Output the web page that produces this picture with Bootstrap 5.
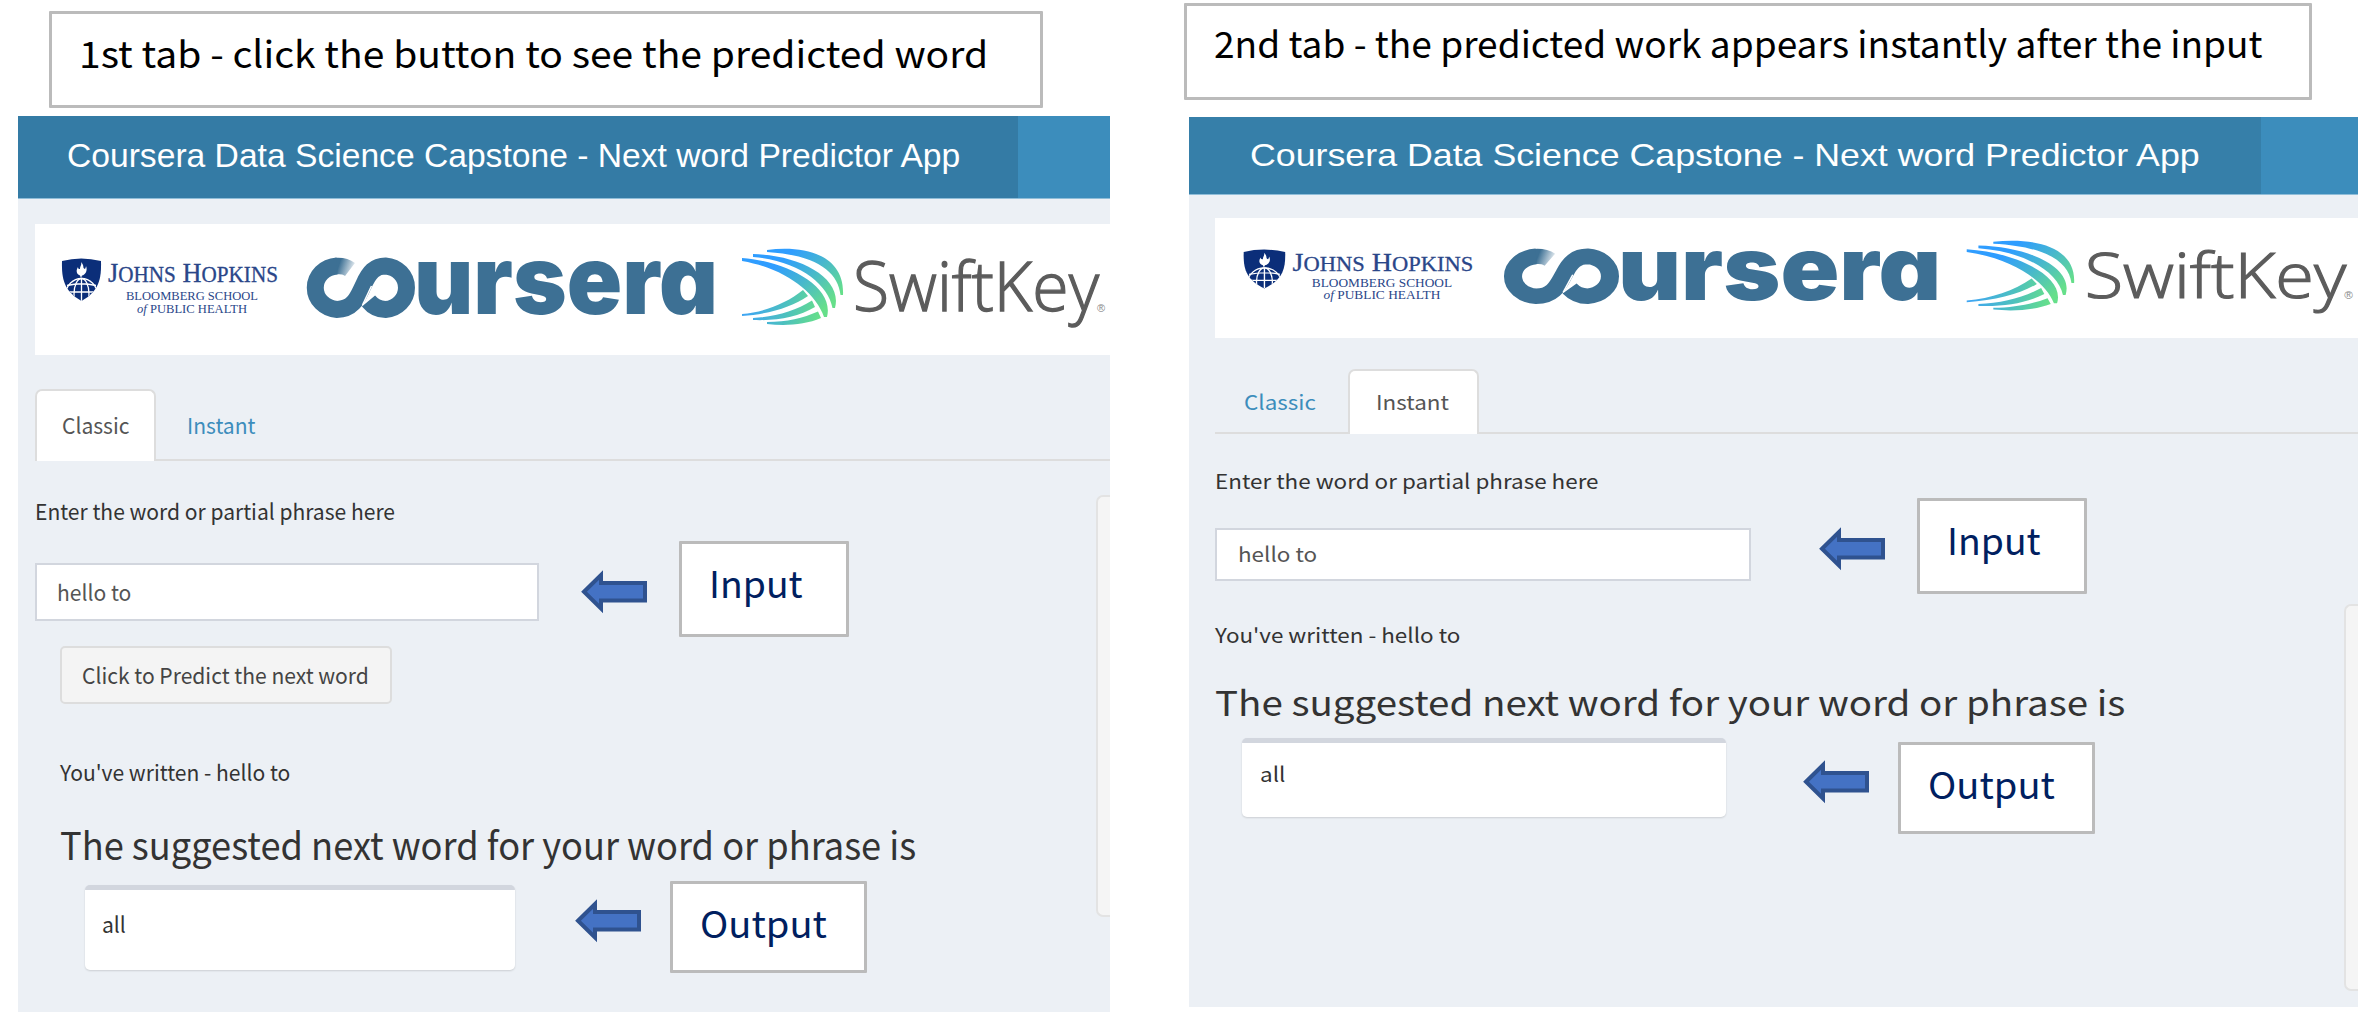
<!DOCTYPE html>
<html lang="en">
<head>
<meta charset="utf-8">
<meta name="viewport" content="width=device-width, initial-scale=1">
<title>Next word Predictor App</title>
<link rel="stylesheet" href="https://cdn.jsdelivr.net/npm/bootstrap@5.3.0/dist/css/bootstrap.min.css">
<style>
  body { width: 2367px; height: 1015px; overflow: hidden; background: #fff; color: #333;
         font-family: "Noto Sans CJK SC", "Noto Sans", sans-serif; }
  /* horizontally stretched text */
  .fit { display: inline-block; white-space: nowrap; transform-origin: 0 50%; transform: scaleX(var(--sx, 1)); }
  .caption-box, .callout { border: 3px solid #bbb; border-radius: 1px; background: #fff; font-size: 37px; line-height: 77px; }
  .caption-box { height: 97px; color: #000; padding-left: 27px; }
  .callout { position: absolute; color: #002060; padding-left: 27px; z-index: 2; }
  .arrow { position: absolute; z-index: 2; overflow: visible; }
  .pane { position: relative; overflow: hidden; background: #ecf0f5; }
  .app-head { background: #3c8dbc; border-bottom: 1px solid #8fbdd8; }
  .app-title { background: #367fa9; color: #fff; font-family: "Liberation Sans", Arial, sans-serif; }
  .logos { background: #fff; }
  .logos svg { display: block; width: 100%; height: 100%; overflow: visible; }
  .app-tabs { border-bottom: 2px solid #ddd; --bs-nav-tabs-border-width: 2px; }
  .app-tabs .nav-link { border: 2px solid transparent; border-bottom: 0; border-radius: 7px 7px 0 0; color: #3c8dbc; padding-top: 0; padding-bottom: 0; margin-bottom: -2px; }
  .app-tabs .nav-link.active { background: #fff; border-color: #ddd; color: #555; }
  .field { background: #fff; border: 2px solid #d2d6de; color: #555; }
  .predict { background: #f4f4f4; border: 2px solid #ddd; border-radius: 5px; color: #444; }
  .answer { background: #fff; border-top: 5px solid #d2d6de; border-radius: 5px; box-shadow: 0 1px 2px rgba(0,0,0,.14); }
  .side-well { position: absolute; background: #f5f5f5; border: 2px solid #e3e3e3; border-right: 0; border-radius: 7px 0 0 7px; }

  /* first tab */
  .col-a { width: 1184px; padding-top: 11px; padding-left: 18px; }
  .col-a .caption-box { width: 994px; margin-left: 31px; --sx: 1.055; }
  .pane-a { width: 1092px; height: 896px; margin-top: 8px; font-size: 22px; line-height: 32px; --sx: .957; }
  .pane-a .app-head { height: 83px; }
  .pane-a .app-title { width: 1000px; padding-left: 49px; font-size: 32.6px; line-height: 80px; background: #347ba5; --sx: 1.032; }
  .pane-a .logos { height: 131px; margin: 25px 0 0 17px; }
  .pane-a .app-tabs { margin: 34px 0 0 17px; height: 72px; }
  .pane-a .nav-link { height: 72px; line-height: 66px; }
  .pane-a .tab-one { width: 121px; padding-left: 25px; }
  .pane-a .tab-two { padding-left: 29px; }
  .pane-a .lbl { margin: 33px 0 0 17px; }
  .pane-a .field { width: 504px; height: 58px; margin: 37px 0 0 17px; padding-left: 20px; line-height: 52px; }
  .pane-a .predict { display: block; width: 332px; height: 58px; margin: 25px 0 0 42px; padding: 0 0 2px 20px; text-align: left; font-size: 22px; line-height: 52px; }
  .pane-a .said { margin: 51px 0 0 42px; }
  .pane-a .headline { margin: 33px 0 0 42px; font-size: 38px; line-height: 48px; --sx: .953; }
  .pane-a .answer { width: 430px; height: 85px; margin: 17px 0 0 67px; padding-left: 17px; line-height: 66px; }
  .pane-a .side-well { left: 1078px; top: 379px; width: 14px; height: 422px; }
  .pane-a .arrow-in { left: 563px; top: 454px; }
  .pane-a .arrow-out { left: 557px; top: 783px; }
  .pane-a .callout-in { left: 661px; top: 425px; width: 170px; height: 96px; --sx: 1.01; }
  .pane-a .callout-out { left: 652px; top: 765px; width: 197px; height: 92px; --sx: 1.03; }

  /* second tab */
  .col-b { width: 1183px; padding-top: 3px; }
  .col-b .caption-box { width: 1128px; line-height: 73px; --sx: 1.002; }
  .pane-b { width: 1169px; height: 890px; margin: 17px 0 0 5px; font-size: 20.4px; line-height: 30px; --sx: 1.1; }
  .pane-b .app-head { height: 78px; }
  .pane-b .app-title { width: 1072px; padding-left: 61px; font-size: 30.5px; line-height: 76px; --sx: 1.172; }
  .pane-b .logos { height: 120px; margin: 23px 0 0 26px; }
  .pane-b .app-tabs { margin: 31px 0 0 26px; height: 65px; }
  .pane-b .nav-link { height: 65px; line-height: 60px; }
  .pane-b .tab-one { width: 133px; padding-left: 27px; }
  .pane-b .tab-two { width: 131px; padding-left: 26px; }
  .pane-b .lbl { margin: 31px 0 0 26px; }
  .pane-b .field { width: 536px; height: 53px; margin: 33px 0 0 26px; padding-left: 21px; line-height: 47px; }
  .pane-b .said { margin: 38px 0 0 26px; }
  .pane-b .headline { margin: 31px 0 0 26px; font-size: 34.7px; line-height: 42px; --sx: 1.11; }
  .pane-b .answer { width: 484px; height: 79px; margin: 16px 0 0 53px; padding-left: 18px; line-height: 60px; }
  .pane-b .side-well { left: 1155px; top: 487px; width: 14px; height: 387px; }
  .pane-b .arrow-in { left: 630px; top: 410px; }
  .pane-b .arrow-out { left: 614px; top: 643px; }
  .pane-b .callout-in { left: 728px; top: 381px; width: 170px; height: 96px; --sx: 1.01; }
  .pane-b .callout-out { left: 709px; top: 625px; width: 197px; height: 92px; line-height: 76px; --sx: 1.03; }

  .t-jh { font-family: "Liberation Serif", serif; fill: #2a4689; }
  .t-coursera { font-family: Inter, sans-serif; font-weight: 900; font-size: 96px; fill: #3d7094; font-feature-settings: "cv11"; }
  .t-swift { font-family: "Open Sans", sans-serif; font-weight: 300; font-size: 68px; fill: #5c5c5c; stroke: #5c5c5c; stroke-width: 1.3px; }
</style>
<script src="https://cdn.jsdelivr.net/npm/bootstrap@5.3.0/dist/js/bootstrap.bundle.min.js"></script>
</head>
<body>
<svg width="0" height="0" class="position-absolute" aria-hidden="true">
  <defs>
    <linearGradient id="wing" gradientUnits="userSpaceOnUse" x1="748" y1="35" x2="792" y2="82">
      <stop offset="0" stop-color="#2f9dff"/><stop offset=".45" stop-color="#46b6cf"/><stop offset="1" stop-color="#66df8a"/>
    </linearGradient>
    <linearGradient id="wing2" gradientUnits="userSpaceOnUse" x1="712" y1="84" x2="784" y2="96">
      <stop offset="0" stop-color="#3fa6f2"/><stop offset=".55" stop-color="#4dc1bd"/><stop offset="1" stop-color="#66df8a"/>
    </linearGradient>
    <linearGradient id="fade" gradientUnits="userSpaceOnUse" x1="303" y1="44" x2="318" y2="49">
      <stop offset="0" stop-color="#3d7094"/><stop offset="1" stop-color="#3d7094" stop-opacity=".1"/>
    </linearGradient>
    <clipPath id="crest"><path d="M27 37Q46 32 66 37C66.500 55 64 67 46.500 77C29 67 26.500 55 27 37Z"/></clipPath>
    <symbol id="shield" viewBox="0 0 1075 131" preserveAspectRatio="none">
      <path d="M27 37Q46 32 66 37C66.500 55 64 67 46.500 77C29 67 26.500 55 27 37Z" fill="#0b2e79"/>
      <path d="M46 38C50 42 47 44 50 45C51 43 51 42 51 42C53 47 50 51 47 51.500L46 54L45 51.500C41 50 41 46 43 43C43 45 44 45 45 45C45 42 47 41 46 38Z" fill="#fff"/>
      <g clip-path="url(#crest)" fill="none" stroke="#fff" stroke-width="1.300">
        <circle cx="46.500" cy="70" r="15.500"/><ellipse cx="46.500" cy="70" rx="7.500" ry="15.500"/>
        <path d="M46.500 54.500V77M32 61.500Q46.500 58 61 61.500M31 68H62"/>
      </g>
    </symbol>
    <symbol id="infinity" viewBox="0 0 1075 131" preserveAspectRatio="none">
      <path d="M301 42C308 41.500 311 42.500 315 45.500" fill="none" stroke="url(#fade)" stroke-width="16.500"/>
      <path d="M302 41.900A23.300 21.800 0 0 0 302 85.400C319 85.400 323 72 328.500 61C334 48 340 41.900 350.500 41.900A22.500 21.800 0 0 1 350.500 85.400C343 85.400 338 82.500 333.500 77" fill="none" stroke="#3d7094" stroke-width="17"/>
      <path d="M336.500 62L327.500 81" stroke="#fff" stroke-width="1.500"/>
    </symbol>
    <symbol id="wings" viewBox="0 0 1075 131" preserveAspectRatio="none">
      <g fill="url(#wing)">
        <path d="M732 26C772 21 810 32 808 71L805.500 71C803 48 782 31 732 28Z"/>
        <path d="M718 30C765 31 808 54 800 84L797.500 84C793 60 764 37 718 33Z"/>
        <path d="M707 34C750 37 800 62 792 93L789 93C780 67 748 44 707 37Z"/>
      </g>
      <g fill="url(#wing2)">
        <path d="M707 90C730 88 752 79 768 66L773 72C757 83 735 90 707 92Z"/>
        <path d="M718 94C740 93 760 87 777 76.500L780 83C763 93 742 97 718 96Z"/>
        <path d="M732 98C752 98 768 94 783 87.500L786 94C770 101 750 102 732 100Z"/>
      </g>
    </symbol>
    <symbol id="left-arrow" viewBox="0 0 66 43.500">
      <path d="M3 21.750L20 5V13H64V30.500H20V38.500Z" fill="#4472c4" stroke="#2f528f" stroke-width="4" stroke-miterlimit="8"/>
    </symbol>
  </defs>
</svg>

<main class="d-flex">
  <section class="col-a flex-shrink-0">
    <div class="caption-box"><span class="fit">1st tab - click the button to see the predicted word</span></div>
    <div class="pane pane-a">
      <header class="app-head"><div class="app-title h-100"><span class="fit">Coursera Data Science Capstone - Next word Predictor App</span></div></header>
      <div class="logos">
        <svg viewBox="0 0 1075 131" preserveAspectRatio="none">
          <use href="#shield" width="1075" height="131"/>
          <g class="t-jh">
            <text x="73" y="57.500" font-size="28" stroke="#2a4689" stroke-width=".3" textLength="170" lengthAdjust="spacingAndGlyphs">J<tspan font-size="22.500">OHNS</tspan> H<tspan font-size="22.500">OPKINS</tspan></text>
            <text x="91" y="75.500" font-size="13.500" textLength="132" lengthAdjust="spacingAndGlyphs">BLOOMBERG SCHOOL</text>
            <text x="102" y="88.500" font-size="13.500" textLength="110" lengthAdjust="spacingAndGlyphs"><tspan font-style="italic">of</tspan> PUBLIC HEALTH</text>
          </g>
          <use href="#infinity" width="1075" height="131"/>
          <text class="t-coursera" x="379" y="89.500" textLength="304" lengthAdjust="spacingAndGlyphs">ursera</text>
          <use href="#wings" width="1075" height="131"/>
          <text class="t-swift" x="818" y="87" textLength="246" lengthAdjust="spacingAndGlyphs">SwiftKey</text>
          <text x="1062" y="88" font-size="11" font-family="Liberation Sans" fill="#888">®</text>
        </svg>
      </div>
      <ul class="nav nav-tabs app-tabs flex-nowrap">
        <li class="nav-item"><a class="nav-link active tab-one"><span class="fit">Classic</span></a></li>
        <li class="nav-item"><a class="nav-link tab-two"><span class="fit">Instant</span></a></li>
      </ul>
      <div class="lbl"><span class="fit">Enter the word or partial phrase here</span></div>
      <div class="field"><span class="fit">hello to</span></div>
      <button class="predict" type="button"><span class="fit">Click to Predict the next word</span></button>
      <div class="said"><span class="fit">You've written - hello to</span></div>
      <div class="headline"><span class="fit">The suggested next word for your word or phrase is</span></div>
      <div class="answer"><span class="fit">all</span></div>
      <div class="side-well"></div>
      <svg class="arrow arrow-in" width="66" height="43.500"><use href="#left-arrow"/></svg>
      <div class="callout callout-in"><span class="fit">Input</span></div>
      <svg class="arrow arrow-out" width="66" height="43.500"><use href="#left-arrow"/></svg>
      <div class="callout callout-out"><span class="fit">Output</span></div>
    </div>
  </section>

  <section class="col-b flex-shrink-0">
    <div class="caption-box"><span class="fit">2nd tab - the predicted work appears instantly after the input</span></div>
    <div class="pane pane-b">
      <header class="app-head"><div class="app-title h-100"><span class="fit">Coursera Data Science Capstone - Next word Predictor App</span></div></header>
      <div class="logos">
        <svg viewBox="0 0 1075 131" preserveAspectRatio="none">
          <use href="#shield" width="1075" height="131"/>
          <g class="t-jh">
            <text x="73" y="57.500" font-size="28" stroke="#2a4689" stroke-width=".3" textLength="170" lengthAdjust="spacingAndGlyphs">J<tspan font-size="22.500">OHNS</tspan> H<tspan font-size="22.500">OPKINS</tspan></text>
            <text x="91" y="75.500" font-size="13.500" textLength="132" lengthAdjust="spacingAndGlyphs">BLOOMBERG SCHOOL</text>
            <text x="102" y="88.500" font-size="13.500" textLength="110" lengthAdjust="spacingAndGlyphs"><tspan font-style="italic">of</tspan> PUBLIC HEALTH</text>
          </g>
          <use href="#infinity" width="1075" height="131"/>
          <text class="t-coursera" x="379" y="89.500" textLength="304" lengthAdjust="spacingAndGlyphs">ursera</text>
          <use href="#wings" width="1075" height="131"/>
          <text class="t-swift" x="818" y="87" textLength="246" lengthAdjust="spacingAndGlyphs">SwiftKey</text>
          <text x="1062" y="88" font-size="11" font-family="Liberation Sans" fill="#888">®</text>
        </svg>
      </div>
      <ul class="nav nav-tabs app-tabs flex-nowrap">
        <li class="nav-item"><a class="nav-link tab-one"><span class="fit">Classic</span></a></li>
        <li class="nav-item"><a class="nav-link active tab-two"><span class="fit">Instant</span></a></li>
      </ul>
      <div class="lbl"><span class="fit">Enter the word or partial phrase here</span></div>
      <div class="field"><span class="fit">hello to</span></div>
      <div class="said"><span class="fit">You've written - hello to</span></div>
      <div class="headline"><span class="fit">The suggested next word for your word or phrase is</span></div>
      <div class="answer"><span class="fit">all</span></div>
      <div class="side-well"></div>
      <svg class="arrow arrow-in" width="66" height="43.500"><use href="#left-arrow"/></svg>
      <div class="callout callout-in"><span class="fit">Input</span></div>
      <svg class="arrow arrow-out" width="66" height="43.500"><use href="#left-arrow"/></svg>
      <div class="callout callout-out"><span class="fit">Output</span></div>
    </div>
  </section>
</main>
</body>
</html>
